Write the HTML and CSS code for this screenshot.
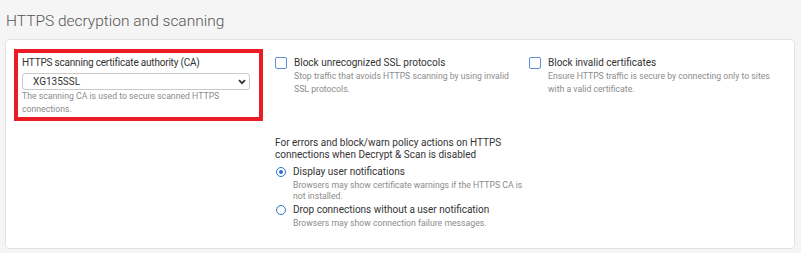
FILE: index.html
```html
<!doctype html>
<html>
<head>
    <meta charset="utf-8">
    <title>HTTPS decryption and scanning</title>
    <link rel="stylesheet" href="styles.css">
</head>
<body>
    <h2 class="section-title">HTTPS decryption and scanning</h2>
    <div class="panel">
        <div class="grid">
            <div class="field highlight">
                <label class="field-label" for="caSelect">HTTPS scanning certificate authority (CA)</label>
                <div class="select-wrap">
                    <select id="caSelect" class="select">
                        <option>XG135SSL</option>
                    </select>
                    <svg class="chevron" width="8" height="6" viewBox="0 0 8 6"><path d="M1 1.2 L4 4.2 L7 1.2" fill="none" stroke="#333" stroke-width="1.8"/></svg>
                </div>
                <p class="help">The scanning CA is used to secure scanned HTTPS connections.</p>
            </div>
            <div class="field check-field">
                <label class="check">
                    <span class="box"></span>
                    <span class="check-label">Block unrecognized SSL protocols</span>
                </label>
                <p class="help indent">Stop traffic that avoids HTTPS scanning by using invalid SSL protocols.</p>
            </div>
            <div class="field check-field">
                <label class="check">
                    <span class="box"></span>
                    <span class="check-label">Block invalid certificates</span>
                </label>
                <p class="help indent">Ensure HTTPS traffic is secure by connecting only to sites with a valid certificate.</p>
            </div>
            <div class="field radio-group">
                <p class="group-label">For errors and block/warn policy actions on HTTPS connections when Decrypt &amp; Scan is disabled</p>
                <label class="radio">
                    <span class="dot checked"></span>
                    <span class="radio-label">Display user notifications</span>
                </label>
                <p class="help radio-help">Browsers may show certificate warnings if the HTTPS CA is not installed.</p>
                <label class="radio">
                    <span class="dot"></span>
                    <span class="radio-label">Drop connections without a user notification</span>
                </label>
                <p class="help radio-help">Browsers may show connection failure messages.</p>
            </div>
        </div>
    </div>
</body>
</html>
```

FILE: styles.css
```css
body {
    font-family: Roboto, "Liberation Sans", sans-serif;
    background-color: #f5f5f5;
    margin: 0;
    padding: 0 5px;
    color: #333;
}
.section-title {
    font-size: 15.5px;
    font-weight: 300;
    color: #555;
    margin: 0;
    padding: 10px 0 0 1px;
    line-height: 22px;
    height: 29px;
}
.panel {
    background-color: #fff;
    border: 1px solid #e2e2e2;
    border-radius: 4px;
    padding: 9px 10px 16px 8px;
    width: 790px;
    box-sizing: border-box;
}
.grid {
    display: grid;
    grid-template-columns: 249px 242px 1fr;
    column-gap: 12px;
    row-gap: 16px;
}
.field p {
    margin: 0;
}
.highlight {
    border: 4px solid #ec1c24;
    padding: 4px 9px 2px 4px;
}
.field-label {
    display: block;
    font-size: 10px;
    line-height: 12px;
    color: #333;
    letter-spacing: -0.2px;
    margin-bottom: 4px;
}
.select-wrap {
    position: relative;
    width: 228px;
}
.select {
    appearance: none;
    width: 100%;
    height: 17px;
    border: 1px solid #c9c9c9;
    border-radius: 3px;
    background: #fff;
    font-family: inherit;
    font-size: 10px;
    color: #333;
    padding: 0 0 0 10px;
    display: block;
}
.chevron {
    position: absolute;
    right: 4px;
    top: 6px;
}
.help {
    font-size: 8.7px;
    line-height: 12.5px;
    color: #8c8c8c;
}
.check-field {
    padding-top: 8px;
}
.check {
    display: flex;
    align-items: center;
    gap: 7px;
}
.box {
    width: 10px;
    height: 10px;
    border: 1.5px solid #5a8fd8;
    border-radius: 2px;
    flex: none;
}
.check-label, .radio-label {
    font-size: 10px;
    line-height: 12px;
    color: #333;
}
.indent {
    padding-left: 19px;
    line-height: 13px;
    margin-top: 1px !important;
}
.radio-group {
    grid-column: 2 / 4;
    max-width: 250px;
}
.group-label {
    font-size: 10px;
    line-height: 12px;
    color: #333;
    margin-bottom: 5px !important;
}
.radio {
    display: flex;
    align-items: center;
    gap: 7px;
    margin-left: 1px;
}
.dot {
    width: 8px;
    height: 8px;
    border: 1.5px solid #2f6fd0;
    border-radius: 50%;
    flex: none;
    position: relative;
}
.dot.checked::after {
    content: "";
    position: absolute;
    left: 2px;
    top: 2px;
    width: 4px;
    height: 4px;
    border-radius: 50%;
    background: #2f6fd0;
}
.radio-help {
    padding-left: 18px;
    line-height: 10.5px;
    margin: 2px 0 3px !important;
}
```
